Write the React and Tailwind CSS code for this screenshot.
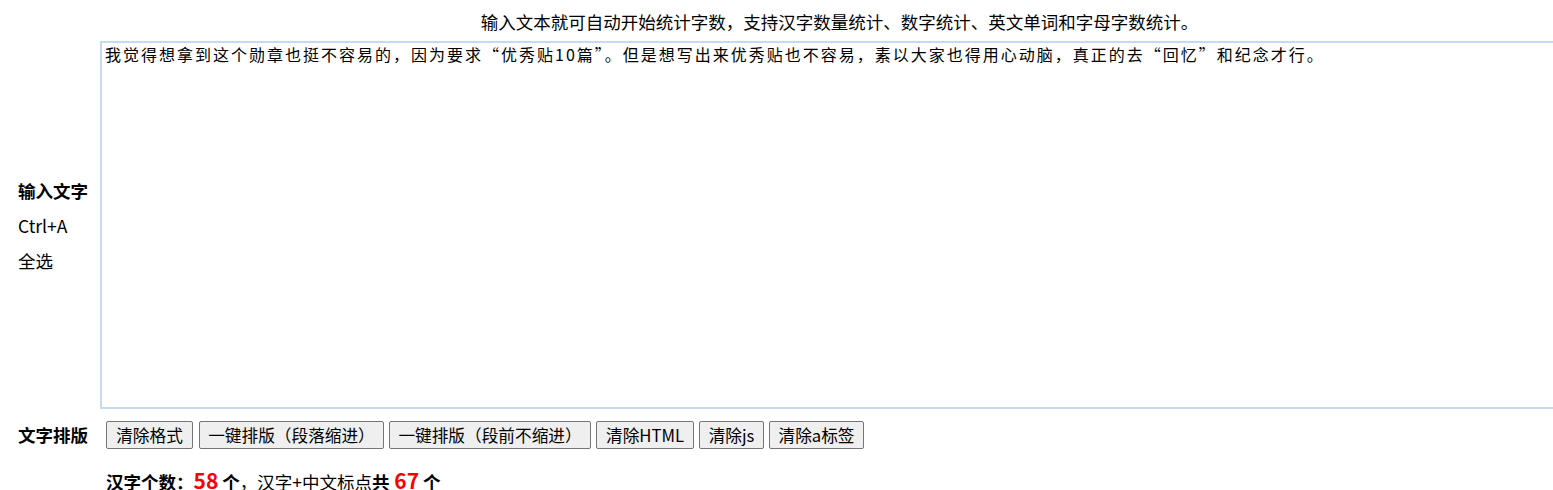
import React from "react";

const text =
  "我觉得想拿到这个勋章也挺不容易的，因为要求“优秀贴10篇”。但是想写出来优秀贴也不容易，素以大家也得用心动脑，真正的去“回忆”和纪念才行。";

const buttons = [
  { label: "清除格式", w: "w-[87px]" },
  { label: "一键排版（段落缩进）", w: "w-[185px]" },
  { label: "一键排版（段前不缩进）", w: "w-[202px]" },
  { label: "清除HTML", w: "w-[98px]" },
  { label: "清除js", w: "w-[65px]" },
  { label: "清除a标签", w: "w-[95px]" },
];

export default function App() {
  return (
    <div
      className="w-[1553px] h-[490px] overflow-hidden bg-white text-black"
      style={{ fontFamily: '"Noto Sans CJK SC", "Noto Sans", sans-serif' }}
    >
      <div className="w-[1579px]">
        {/* header */}
        <div className="flex h-[41px]">
          <div className="w-[100px] shrink-0" />
          <div className="flex-1 text-center text-[17.5px] leading-[36px] pt-[4px]">
            输入文本就可自动开始统计字数，支持汉字数量统计、数字统计、英文单词和字母字数统计。
          </div>
        </div>

        {/* textarea row */}
        <div className="flex h-[368px]">
          <div className="w-[100px] shrink-0 flex flex-col justify-center pl-[18px] text-[17.5px] leading-[35px]">
            <div className="font-bold">输入文字</div>
            <div>Ctrl+A</div>
            <div>全选</div>
          </div>
          <textarea
            readOnly
            value={text}
            className="flex-1 h-full resize-none border-2 border-[#c7d9ef] outline-none px-[3px] pt-[1px] text-[16px] leading-[20px] tracking-[2px] text-black bg-white"
            style={{ fontFamily: '"Noto Sans CJK SC", monospace' }}
          />
        </div>

        {/* buttons row */}
        <div className="flex items-center pt-[12px]">
          <div className="w-[100px] shrink-0 pl-[18px] font-bold text-[17.5px] leading-[28px]">
            文字排版
          </div>
          <div className="flex gap-[5px] pl-[6px]">
            {buttons.map((b, i) => (
              <button
                key={b.label}
                className={`${b.w} ${i === 1 ? "ml-[1px]" : ""} h-[28px] shrink-0 flex items-center justify-center bg-[#efefef] border border-[#767676] rounded-[2px] text-[16.67px] leading-none whitespace-nowrap text-black`}
              >
                {b.label}
              </button>
            ))}
          </div>
        </div>

        {/* stats row */}
        <div className="flex mt-[14px] leading-[35px] text-[17.5px]">
          <div className="w-[106px] shrink-0" />
          <div className="whitespace-nowrap">
            <span className="font-bold">汉字个数：</span>
            <span className="font-bold text-[21px] text-[#ff0000]">58</span>
            <span className="font-bold"> 个</span>
            <span>，汉字+中文标点</span>
            <span className="font-bold">共</span>
            <span className="font-bold text-[21px] text-[#ff0000]"> 67</span>
            <span className="font-bold"> 个</span>
          </div>
        </div>
      </div>
    </div>
  );
}
